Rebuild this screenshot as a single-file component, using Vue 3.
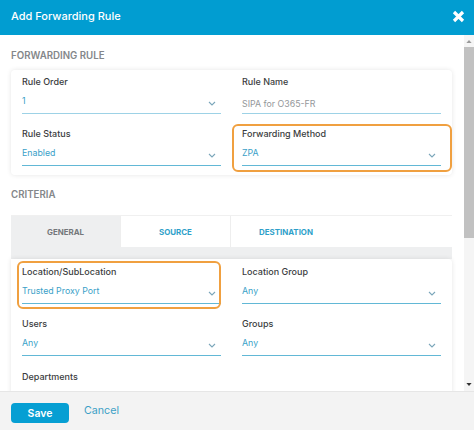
<script setup>
const rule = [
  { label: 'Rule Order', value: '1', select: true, light: true },
  { label: 'Rule Name', value: 'SIPA for O365-FR', input: true, light: true },
  { label: 'Rule Status', value: 'Enabled', select: true },
  { label: 'Forwarding Method', value: 'ZPA', select: true, mark: 'mark-right' },
]
const criteria = [
  { label: 'Location/SubLocation', value: 'Trusted Proxy Port', select: true, mark: 'mark-left' },
  { label: 'Location Group', value: 'Any', select: true },
  { label: 'Users', value: 'Any', select: true },
  { label: 'Groups', value: 'Any', select: true },
]
</script>

<template>
  <div class="dialog">
    <header class="head">
      <span class="title">Add Forwarding Rule</span>
      <svg class="close" width="13" height="13" viewBox="0 0 13 13"><path d="M2 2l9 9M11 2l-9 9" stroke="#fff" stroke-width="3.2" fill="none"/></svg>
    </header>
    <div class="middle">
      <main class="body">
        <h2 class="section first">FORWARDING RULE</h2>
        <section class="card">
          <div v-for="f in rule" :key="f.label" class="field" :class="f.mark">
            <div class="label">{{ f.label }}</div>
            <div class="control" :class="{ light: f.light }">
              <span class="value" :class="{ plain: f.input }">{{ f.value }}</span>
              <svg v-if="f.select" class="chev" width="8" height="5" viewBox="0 0 8 5"><path d="M1 1l3 3 3-3" stroke="#7ba6ba" stroke-width="1.1" fill="none"/></svg>
            </div>
          </div>
        </section>
        <h2 class="section second">CRITERIA</h2>
        <section class="tabs-wrap">
          <nav class="tabs">
            <div class="tab active">GENERAL</div>
            <div class="tab">SOURCE</div>
            <div class="tab">DESTINATION</div>
          </nav>
          <div class="tab-gap"></div>
          <div class="card inner">
            <div v-for="f in criteria" :key="f.label" class="field" :class="f.mark">
              <div class="label">{{ f.label }}</div>
              <div class="control">
                <span class="value">{{ f.value }}</span>
                <svg class="chev" width="8" height="5" viewBox="0 0 8 5"><path d="M1 1l3 3 3-3" stroke="#7ba6ba" stroke-width="1.1" fill="none"/></svg>
              </div>
            </div>
            <div class="label dept">Departments</div>
          </div>
        </section>
      </main>
      <aside class="scrollbar">
        <svg width="6" height="3" viewBox="0 0 7 4"><path d="M3.5 0L7 4H0z" fill="#9a9a9a"/></svg>
        <div class="track"><div class="thumb"></div></div>
        <svg width="6" height="3" viewBox="0 0 7 4"><path d="M0 0h7L3.5 4z" fill="#333"/></svg>
      </aside>
    </div>
    <footer class="foot">
      <button class="save">Save</button>
      <span class="cancel">Cancel</span>
    </footer>
  </div>
</template>

<style scoped>
.dialog {
  width: 474px;
  height: 432px;
  display: flex;
  flex-direction: column;
  overflow: hidden;
  background: #fff;
  font-family: Inter, "Liberation Sans", sans-serif;
}
.head {
  height: 35px;
  flex: none;
  box-sizing: border-box;
  background: #019dd1;
  display: flex;
  align-items: center;
  justify-content: space-between;
  padding: 0 9px 2px 11px;
}
.title {
  color: #fff;
  font-size: 11px;
  font-weight: 500;
  margin-top: -2px;
}
.middle {
  height: 356px;
  flex: none;
  display: flex;
  overflow: hidden;
}
.body {
  width: 464px;
  flex: none;
  box-sizing: border-box;
  padding: 0 12px 0 11px;
  overflow: hidden;
}
.section {
  margin: 0;
  font-size: 9.7px;
  line-height: 14px;
  font-weight: 600;
  color: #84878a;
}
.first { padding-top: 14px; }
.second { padding-top: 13px; }
.card {
  display: grid;
  grid-template-columns: 199px 199px;
  column-gap: 21px;
  row-gap: 13px;
  padding: 5px 11px 9px;
  margin-top: 7px;
  width: 441px;
  box-sizing: border-box;
  background: #fff;
  border-radius: 4px;
  box-shadow: 0 0 5px rgba(0, 0, 0, 0.1);
}
.field { position: relative; }
.label {
  font-size: 9px;
  line-height: 14px;
  font-weight: 500;
  color: #3b3d40;
}
.control {
  height: 23px;
  margin-top: 2px;
  box-sizing: border-box;
  border-bottom: 1px solid #62b8d6;
  display: flex;
  align-items: center;
  justify-content: space-between;
}
.control.light { border-bottom-color: #9dd2e6; }
.value {
  font-size: 8.8px;
  color: #3a9fc8;
  margin-top: -3px;
}
.value.plain { color: #94979a; margin-top: 2px; }
.chev { margin-right: 5px; margin-top: 2px; }
.mark-right::after,
.mark-left::after {
  content: "";
  position: absolute;
  border: 2px solid #f0a040;
  border-radius: 6px;
  pointer-events: none;
}
.mark-right::after { left: -10px; right: -11px; top: -3px; bottom: -6px; }
.mark-left::after { left: -5px; right: 0; top: -4px; bottom: -5px; }
.tabs-wrap {
  margin-top: 13px;
  width: 441px;
  border-top: 1px solid #f0f0f0;
}
.tabs {
  display: flex;
  height: 31px;
}
.tab {
  width: 110px;
  box-sizing: border-box;
  border-right: 1px solid #eee;
  display: flex;
  align-items: center;
  justify-content: center;
  font-size: 7.9px;
  font-weight: 700;
  color: #2f9fc9;
}
.tab:last-child { border-right: 0; }
.tab.active {
  background: #eeeff0;
  color: #74777a;
}
.tab-gap {
  height: 12px;
  background: #eeeff0;
}
.card.inner {
  margin-top: 0;
  padding-top: 6px;
  padding-bottom: 30px;
  border-radius: 0 4px 0 0;
}
.dept {
  grid-column: 1 / -1;
  margin-top: 1px;
}
.scrollbar {
  width: 10px;
  flex: none;
  background: #f5f5f5;
  display: flex;
  flex-direction: column;
  align-items: center;
  justify-content: space-between;
  padding: 5px 0;
  box-sizing: border-box;
}
.track {
  width: 10px;
  flex: 1;
  padding-top: 4px;
}
.thumb {
  height: 191px;
  background: #c1c1c1;
}
.foot {
  height: 39px;
  flex: none;
  background: #f3f3f3;
  border-top: 1px solid #e6e6e6;
  box-sizing: border-box;
  display: flex;
  align-items: center;
  padding-left: 11px;
  gap: 15px;
}
.save {
  width: 58px;
  height: 20px;
  margin-top: 4px;
  border: 0;
  border-radius: 4px;
  background: #069fd3;
  color: #fff;
  font-family: inherit;
  font-size: 10.5px;
  font-weight: 600;
  padding: 0;
}
.cancel {
  color: #3b9fc6;
  font-size: 10.7px;
  margin-top: -1px;
}
</style>
